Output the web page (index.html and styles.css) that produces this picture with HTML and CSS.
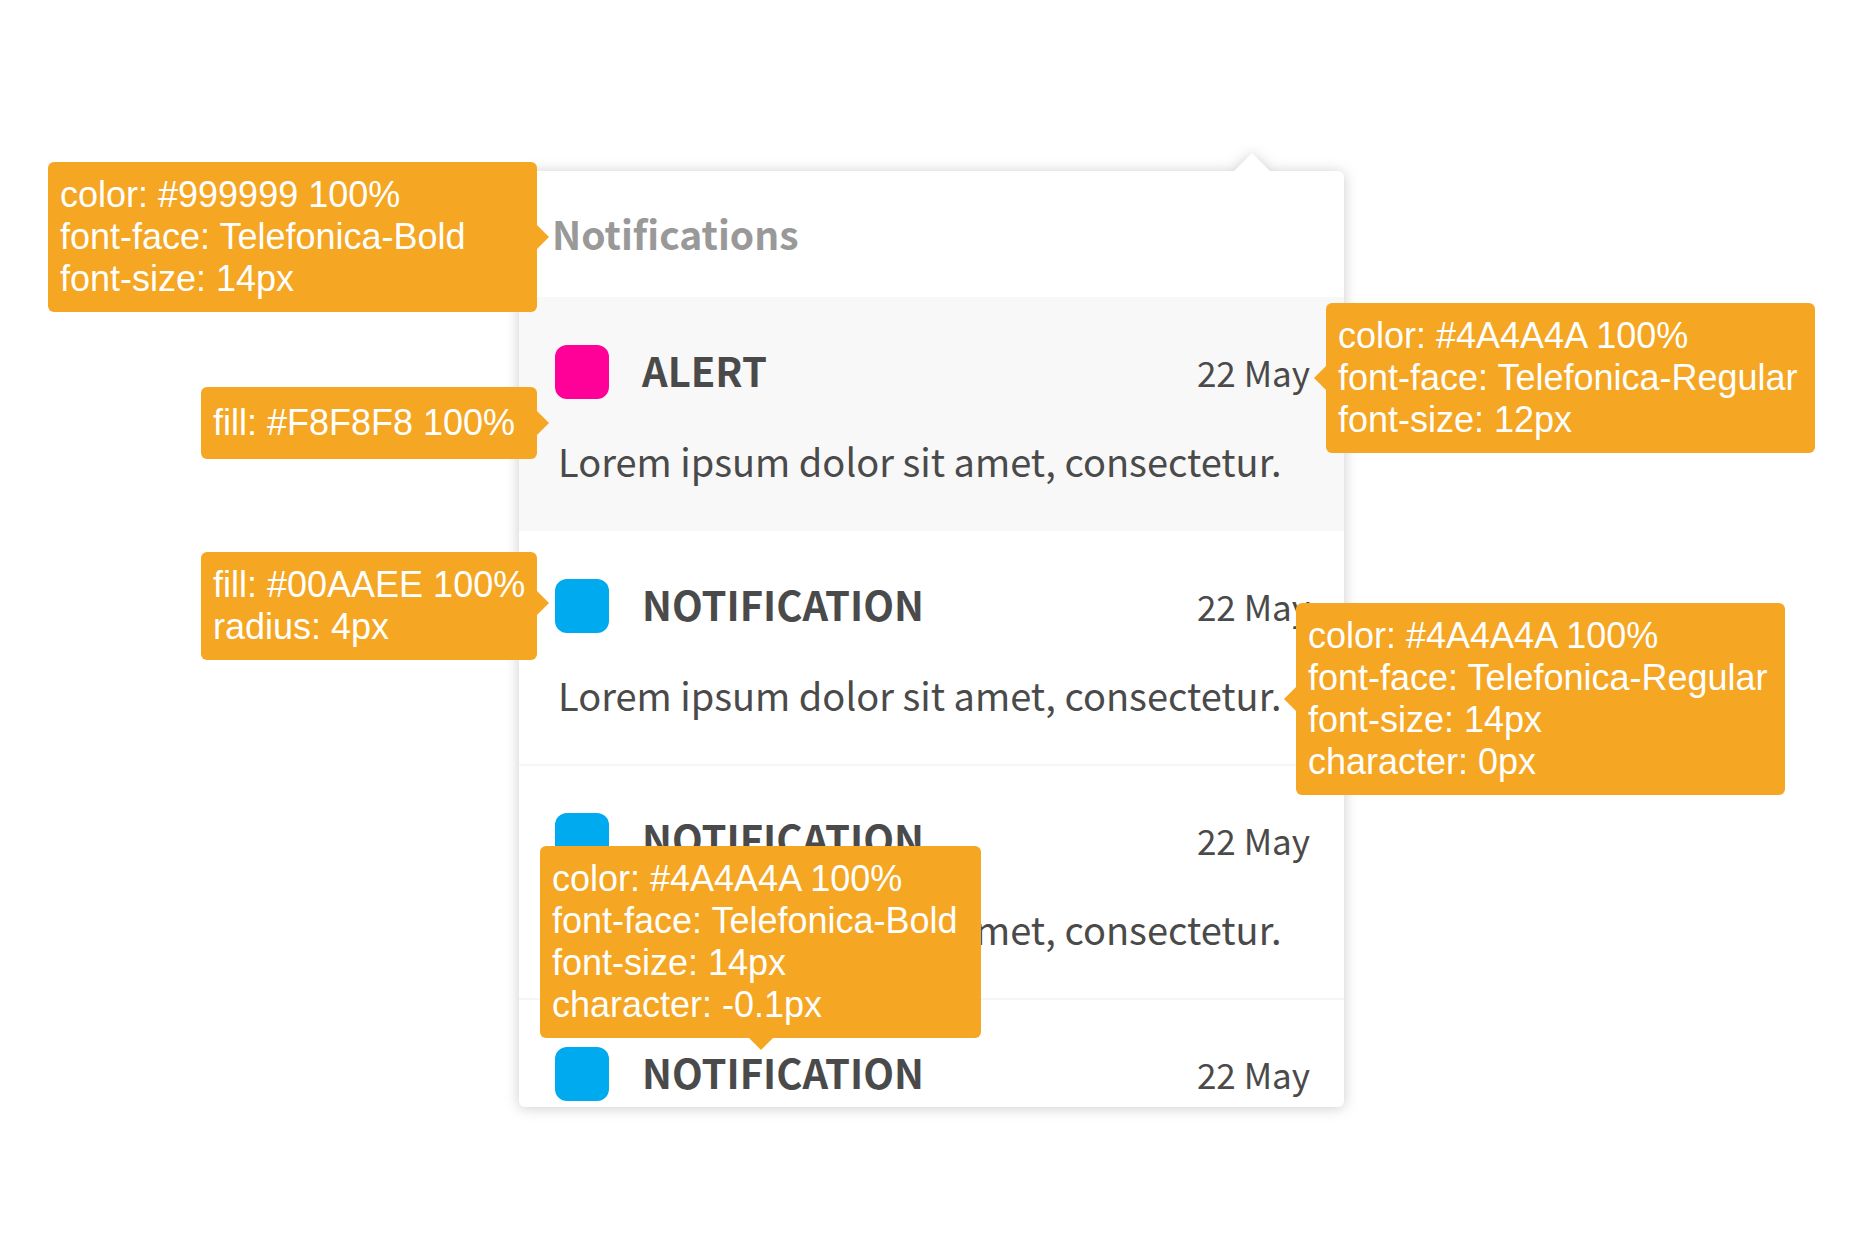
FILE: index.html
```html
<!DOCTYPE html>
<html lang="en">
<head>
<meta charset="utf-8">
<meta name="viewport" content="width=device-width, initial-scale=1">
<title>Notifications popover spec</title>
<link rel="stylesheet" href="styles.css">
</head>
<body>
<main class="sheet">
  <div class="stage">
    <section class="panel" aria-labelledby="panel-title">
      <h1 class="panel-title" id="panel-title">Notifications</h1>
      <ul class="list">
        <li class="item item-alert">
          <div class="item-head">
            <span class="swatch swatch-alert"></span>
            <h2 class="item-title">ALERT</h2>
            <time class="item-date">22 May</time>
          </div>
          <p class="item-text">Lorem ipsum dolor sit amet, consectetur.</p>
        </li>
        <li class="item">
          <div class="item-head">
            <span class="swatch"></span>
            <h2 class="item-title">NOTIFICATION</h2>
            <time class="item-date">22 May</time>
          </div>
          <p class="item-text">Lorem ipsum dolor sit amet, consectetur.</p>
        </li>
        <li class="item">
          <div class="item-head">
            <span class="swatch"></span>
            <h2 class="item-title">NOTIFICATION</h2>
            <time class="item-date">22 May</time>
          </div>
          <p class="item-text">Lorem ipsum dolor sit amet, consectetur.</p>
        </li>
        <li class="item item-cut">
          <div class="item-head">
            <span class="swatch"></span>
            <h2 class="item-title">NOTIFICATION</h2>
            <time class="item-date">22 May</time>
          </div>
        </li>
      </ul>
    </section>

    <aside class="note note-left note-heading">
      <p>color: #999999 100%</p>
      <p>font-face: Telefonica-Bold</p>
      <p>font-size: 14px</p>
    </aside>
    <aside class="note note-left note-fill">
      <p>fill: #F8F8F8 100%</p>
    </aside>
    <aside class="note note-left note-swatch">
      <p>fill: #00AAEE 100%</p>
      <p>radius: 4px</p>
    </aside>
    <aside class="note note-right note-date">
      <p>color: #4A4A4A 100%</p>
      <p>font-face: Telefonica-Regular</p>
      <p>font-size: 12px</p>
    </aside>
    <aside class="note note-right note-text">
      <p>color: #4A4A4A 100%</p>
      <p>font-face: Telefonica-Regular</p>
      <p>font-size: 14px</p>
      <p>character: 0px</p>
    </aside>
    <aside class="note note-above note-title">
      <p>color: #4A4A4A 100%</p>
      <p>font-face: Telefonica-Bold</p>
      <p>font-size: 14px</p>
      <p>character: -0.1px</p>
    </aside>
  </div>
</main>
</body>
</html>
```
FILE: styles.css
```css
* {
  box-sizing: border-box;
}

body,
h1,
h2,
p,
ul {
  margin: 0;
  padding: 0;
}

body {
  background: #fff;
  color: #4a4a4a;
  font-family: "Noto Sans CJK SC", "Noto Sans", sans-serif;
}

.sheet {
  display: flex;
  justify-content: center;
  padding: 171px 45px 153px 48px;
}

.stage {
  position: relative;
  width: 100%;
  max-width: 825px;
}

/* Popover */
.panel {
  position: relative;
  background: #fff;
  border-radius: 6px;
  filter: drop-shadow(0 1px 7px rgba(0, 0, 0, 0.2));
}

.panel::before {
  content: "";
  position: absolute;
  right: 74px;
  bottom: 100%;
  border: solid transparent;
  border-width: 0 18px 18px;
  border-bottom-color: #fff;
}

.panel-title {
  padding: 37px 33px 39px;
  color: #999;
  font-size: 39px;
  font-weight: 700;
  line-height: 50px;
}

.list {
  list-style: none;
}

.item {
  min-height: 234px;
  padding: 47px 34px 44px 36px;
  border: solid #f6f6f6;
  border-width: 1px 0;
}

.item-alert {
  background: #f8f8f8;
  border-color: #f8f8f8;
}

.item-alert + .item {
  border-top-color: transparent;
}

.item-cut {
  min-height: 0;
  padding-bottom: 6px;
  border-bottom: 0;
}

.item-head {
  display: flex;
  gap: 33px;
}

.swatch {
  flex: none;
  width: 54px;
  height: 54px;
  border-radius: 12px;
  background: #00aaee;
}

.swatch-alert {
  background: #ff0099;
}

.item-title {
  flex: 1;
  font-size: 40px;
  font-weight: 700;
  line-height: 50px;
}

.item-date {
  font-size: 35px;
  line-height: 54px;
}

.item-text {
  margin-top: 37px;
  padding-left: 3px;
  font-size: 38px;
  line-height: 50px;
}

/* Spec notes, laid over the popover */
.note {
  position: absolute;
  display: flex;
  flex-direction: column;
  justify-content: center;
  width: 489px;
  min-height: 72px;
  padding: 12px;
  border-radius: 6px;
  background: #f5a623;
  color: #fff;
  font-family: "Liberation Sans", Arial, sans-serif;
  font-size: 36px;
  line-height: 42px;
  white-space: nowrap;
}

.note::after {
  content: "";
  position: absolute;
  top: calc(50% - 12px);
  border: solid transparent;
}

.note-left {
  right: calc(100% - 18px);
}

.note-left::after {
  left: 100%;
  border-width: 12px 0 12px 12px;
  border-left-color: #f5a623;
}

.note-right::after {
  right: 100%;
  border-width: 12px 12px 12px 0;
  border-right-color: #f5a623;
}

.note-above::after {
  top: 100%;
  left: calc(50% - 12px);
  border-width: 12px 12px 0;
  border-top-color: #f5a623;
}

.note-heading {
  top: -9px;
}

.note-fill {
  top: 216px;
  width: 336px;
}

.note-swatch {
  top: 381px;
  width: 336px;
}

.note-swatch::after {
  top: 39px;
}

.note-date {
  top: 132px;
  left: calc(100% - 18px);
}

.note-text {
  top: 432px;
  left: calc(100% - 48px);
}

.note-title {
  top: 675px;
  left: 21px;
  width: 441px;
}
```
